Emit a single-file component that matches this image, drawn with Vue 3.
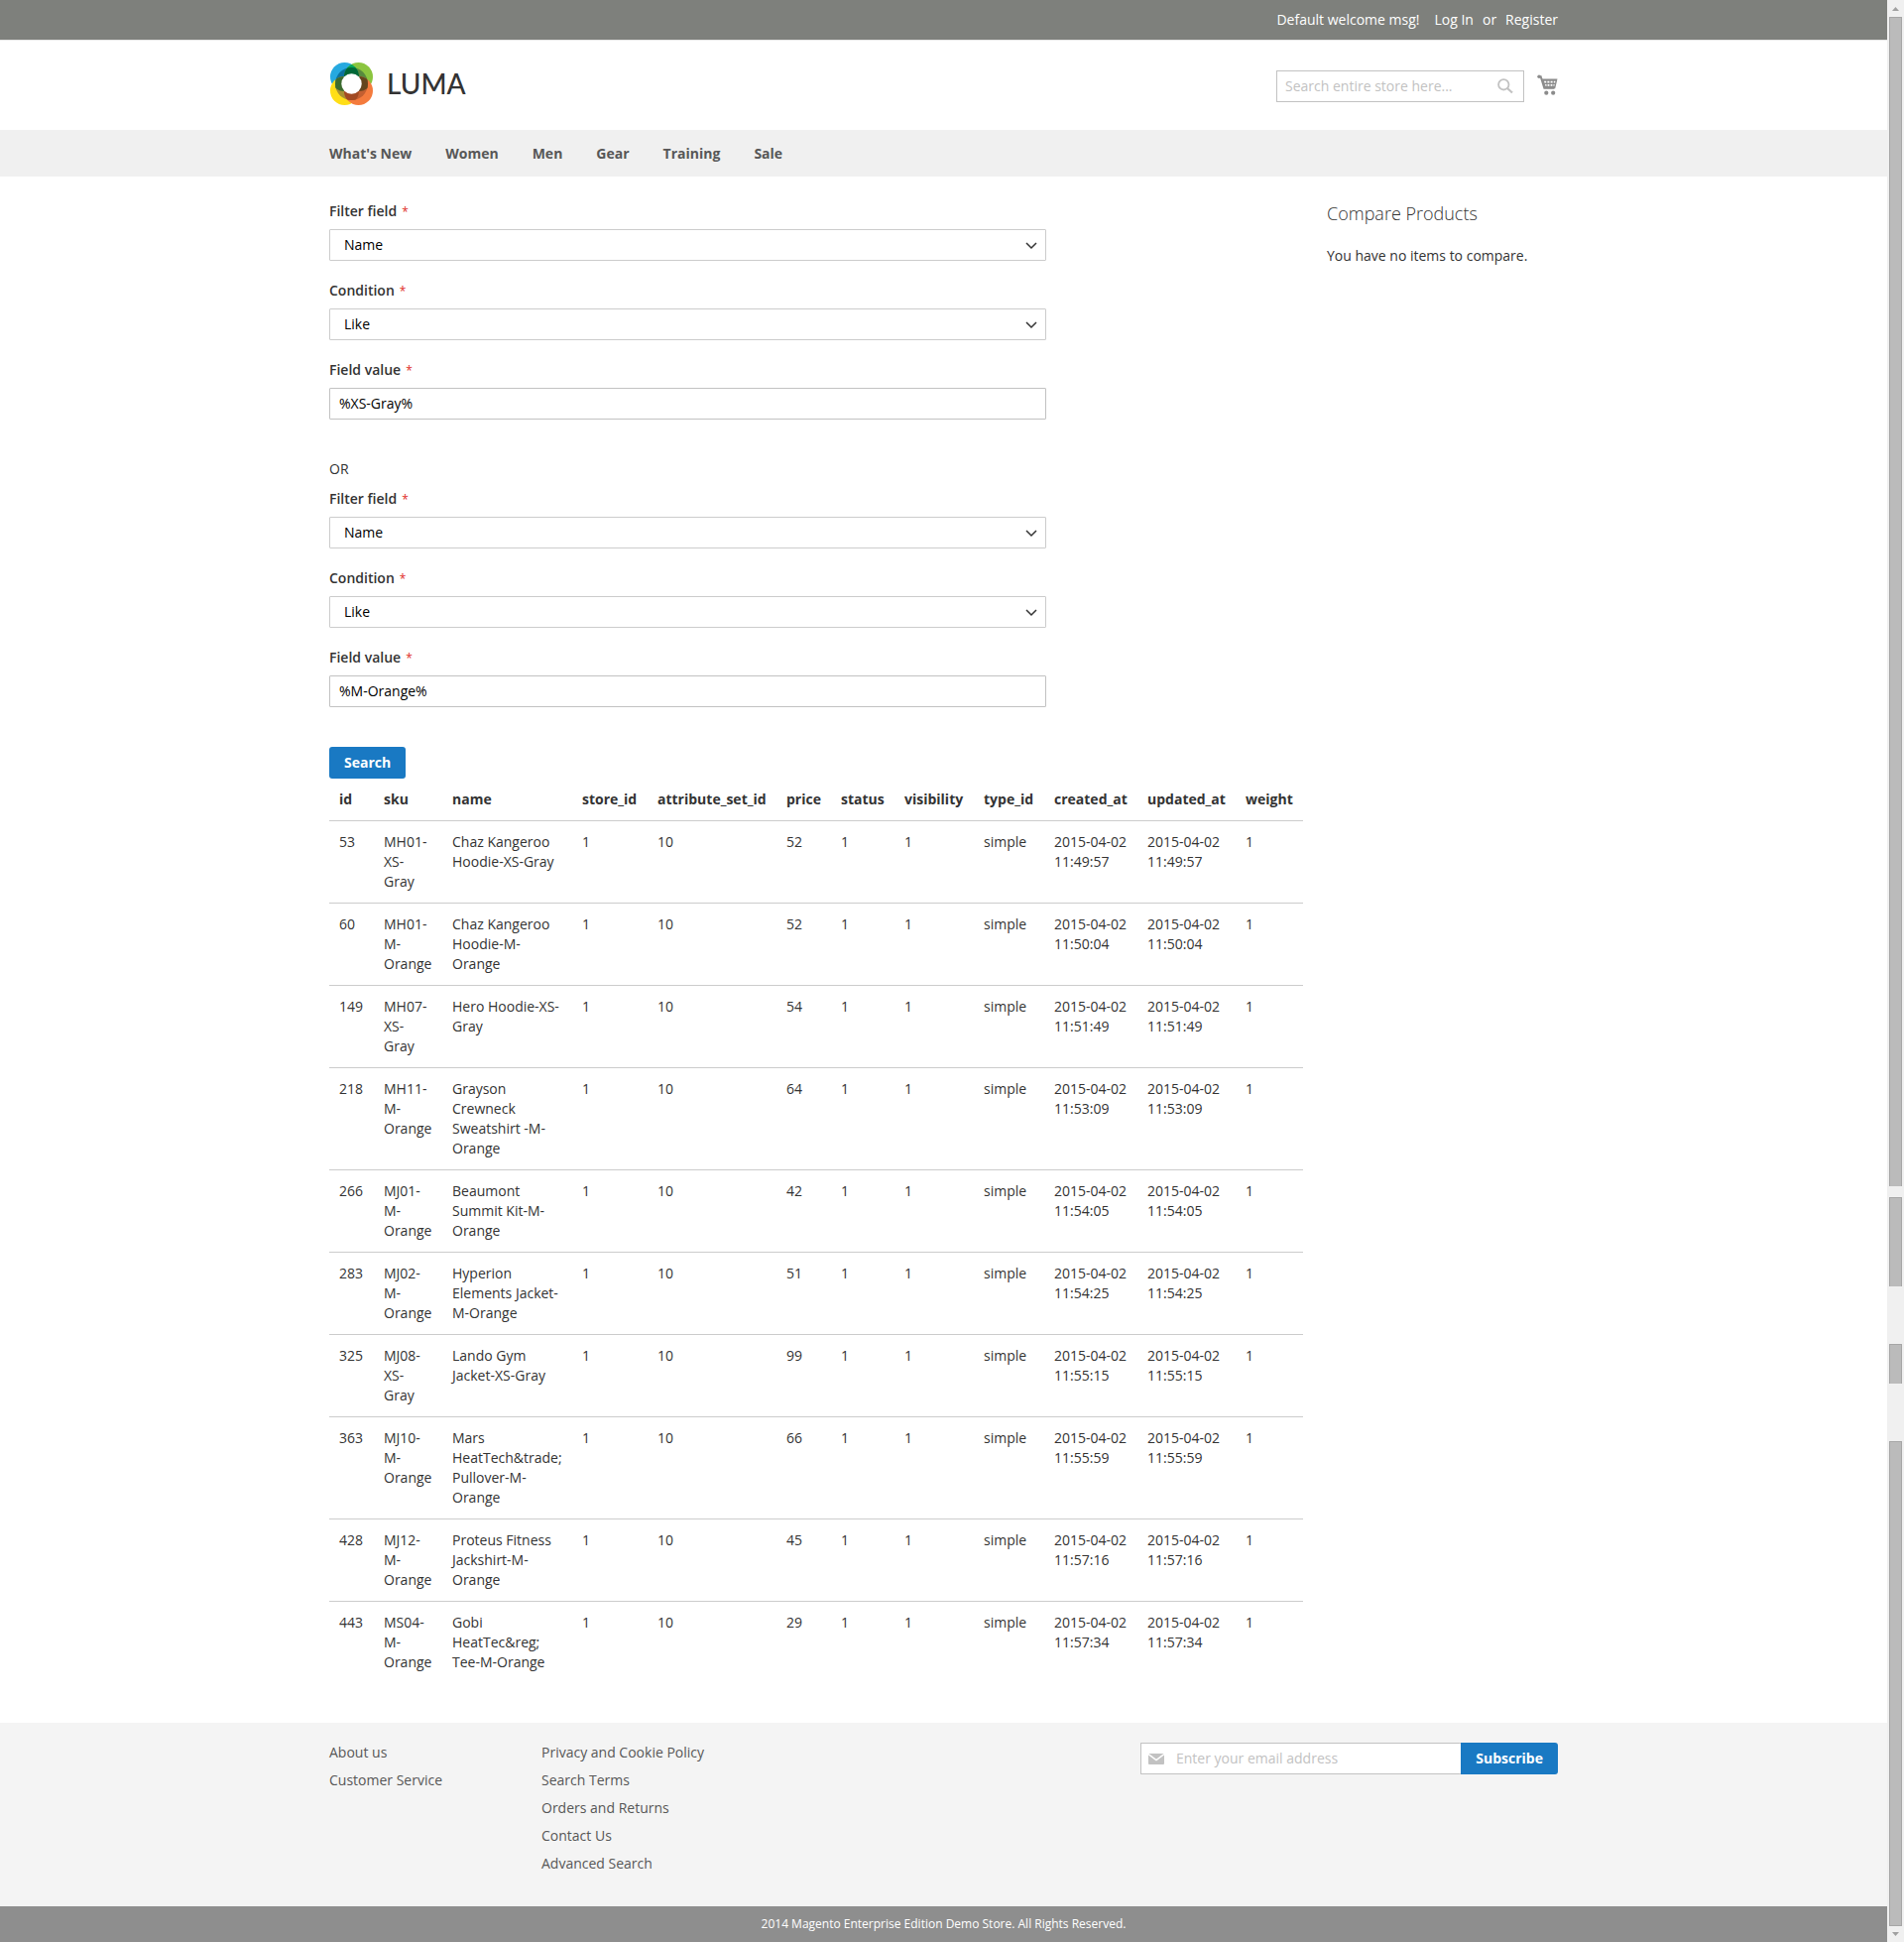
<script setup>
import { ref } from 'vue'

const nav = ["What's New", 'Women', 'Men', 'Gear', 'Training', 'Sale']

const filters = ref([
  { field: 'Name', condition: 'Like', value: '%XS-Gray%' },
  { field: 'Name', condition: 'Like', value: '%M-Orange%' },
])

const columns = [
  'id', 'sku', 'name', 'store_id', 'attribute_set_id', 'price',
  'status', 'visibility', 'type_id', 'created_at', 'updated_at', 'weight',
]

const products = [
  [53, 'MH01-XS-Gray', 'Chaz Kangeroo Hoodie-XS-Gray', 52, '11:49:57'],
  [60, 'MH01-M-Orange', 'Chaz Kangeroo Hoodie-M-Orange', 52, '11:50:04'],
  [149, 'MH07-XS-Gray', 'Hero Hoodie-XS-Gray', 54, '11:51:49'],
  [218, 'MH11-M-Orange', 'Grayson Crewneck Sweatshirt -M-Orange', 64, '11:53:09'],
  [266, 'MJ01-M-Orange', 'Beaumont Summit Kit-M-Orange', 42, '11:54:05'],
  [283, 'MJ02-M-Orange', 'Hyperion Elements Jacket-M-Orange', 51, '11:54:25'],
  [325, 'MJ08-XS-Gray', 'Lando Gym Jacket-XS-Gray', 99, '11:55:15'],
  [363, 'MJ10-M-Orange', 'Mars HeatTech&trade; Pullover-M-Orange', 66, '11:55:59'],
  [428, 'MJ12-M-Orange', 'Proteus Fitness Jackshirt-M-Orange', 45, '11:57:16'],
  [443, 'MS04-M-Orange', 'Gobi HeatTec&reg; Tee-M-Orange', 29, '11:57:34'],
].map(([id, sku, name, price, time]) => {
  const stamp = `2015-04-02 ${time}`
  return [id, sku, name, 1, 10, price, 1, 1, 'simple', stamp, stamp, 1]
})

const footerLinks = [
  ['About us', 'Customer Service'],
  ['Privacy and Cookie Policy', 'Search Terms', 'Orders and Returns', 'Contact Us', 'Advanced Search'],
]
</script>

<template>
  <div class="viewport">
    <div class="page">
      <header>
        <div class="panel">
          <div class="container panel-links">
            <span class="welcome">Default welcome msg!</span>
            <a href="#">Log In</a>
            <span class="or">or</span>
            <a href="#">Register</a>
          </div>
        </div>
        <div class="container masthead">
          <a class="logo" href="#">
            <svg width="43" height="43" viewBox="0 0 43 43" aria-hidden="true">
              <circle cx="14.500" cy="14.500" r="14.500" fill="#26a9e0" />
              <circle cx="28.500" cy="14.500" r="14.500" fill="#8bc53f" />
              <circle cx="14.500" cy="28.500" r="14.500" fill="#ffde17" />
              <circle cx="28.500" cy="28.500" r="14.500" fill="#f47b3d" />
              <clipPath id="tl"><circle cx="14.500" cy="14.500" r="14.500" /></clipPath>
              <clipPath id="tr"><circle cx="28.500" cy="14.500" r="14.500" /></clipPath>
              <clipPath id="bl"><circle cx="14.500" cy="28.500" r="14.500" /></clipPath>
              <clipPath id="br"><circle cx="28.500" cy="28.500" r="14.500" /></clipPath>
              <clipPath id="ring"><circle cx="21.500" cy="21.500" r="16.500" /></clipPath>
              <g clip-path="url(#tl)">
                <circle cx="21.500" cy="21.500" r="16.500" fill="#0b729f" />
              </g>
              <g clip-path="url(#tr)">
                <circle cx="21.500" cy="21.500" r="16.500" fill="#578a3e" />
              </g>
              <g clip-path="url(#bl)">
                <circle cx="21.500" cy="21.500" r="16.500" fill="#a89132" />
              </g>
              <g clip-path="url(#br)">
                <circle cx="21.500" cy="21.500" r="16.500" fill="#c35f31" />
              </g>
              <g clip-path="url(#ring)">
                <g clip-path="url(#tl)">
                  <circle cx="14.500" cy="28.500" r="14.500" fill="#3c6b2f" />
                </g>
                <g clip-path="url(#br)">
                  <circle cx="28.500" cy="14.500" r="14.500" fill="#64451d" />
                  <circle cx="14.500" cy="28.500" r="14.500" fill="#a24a22" />
                </g>
              </g>
              <g clip-path="url(#tl)">
                <path d="M15 17V0h13v17z" fill="#00a65c" clip-path="url(#tr)" />
              </g>
              <g clip-path="url(#tl)">
                <g clip-path="url(#tr)"><circle cx="21.500" cy="21.500" r="16.500" fill="#006838" /></g>
              </g>
              <circle cx="21.500" cy="21.500" r="10.200" fill="#fff" />
            </svg>
            <span>LUMA</span>
          </a>
          <div class="tools">
            <form class="site-search" @submit.prevent>
              <input type="text" placeholder="Search entire store here..." aria-label="Search" />
              <button type="submit" aria-label="Search">
                <svg width="16" height="16" viewBox="0 0 16 16" aria-hidden="true">
                  <circle cx="6.300" cy="6.300" r="5.200" fill="none" stroke="#c2c2c2" stroke-width="1.800" />
                  <path d="M10 10l5 4.500" stroke="#c2c2c2" stroke-width="2.200" />
                </svg>
              </button>
            </form>
            <a class="cart" href="#" aria-label="My Cart">
              <svg width="21" height="22" viewBox="0 0 21 22" aria-hidden="true">
                <path d="M1.500 2.200h2.200l3.600 11.500h10" fill="none" stroke="#8c8c8c" stroke-width="2" />
                <circle cx="2" cy="2.200" r="1.700" fill="#8c8c8c" />
                <path d="M4.800 4.500h15.700l-2.300 9.800H7.600z" fill="#8c8c8c" />
                <path
                  d="M7 6.800h2.200v1.700H7.500zM10.400 6.800h2v1.700h-2zM13.600 6.800h2v1.700h-2zM16.800 6.800h1.700l-.4 1.700h-1.300zM8 10h1.500v1.700H8.500zM10.600 10h1.800v1.700h-1.800zM13.600 10h1.800v1.700h-1.800zM16.500 10h1.200l-.4 1.700h-.8z"
                  fill="#fff"
                />
                <circle cx="9.300" cy="18.700" r="2.100" fill="#8c8c8c" />
                <circle cx="16.200" cy="18.700" r="2.100" fill="#8c8c8c" />
              </svg>
            </a>
          </div>
        </div>
        <nav>
          <div class="container nav-links">
            <a v-for="item in nav" :key="item" href="#">{{ item }}</a>
          </div>
        </nav>
      </header>

      <div class="container columns">
        <main>
          <form class="filters" @submit.prevent>
            <template v-for="(filter, i) in filters" :key="i">
              <p v-if="i > 0" class="separator">OR</p>
              <fieldset>
                <div class="field">
                  <label :for="`field-${i}`">Filter field<em>*</em></label>
                  <div class="select">
                    <select :id="`field-${i}`" v-model="filter.field"><option>Name</option></select>
                    <svg width="12" height="8" viewBox="0 0 12 8" aria-hidden="true">
                      <path d="M1 1l5 5 5-5" fill="none" stroke="#333" stroke-width="1.500" />
                    </svg>
                  </div>
                </div>
                <div class="field">
                  <label :for="`condition-${i}`">Condition<em>*</em></label>
                  <div class="select">
                    <select :id="`condition-${i}`" v-model="filter.condition"><option>Like</option></select>
                    <svg width="12" height="8" viewBox="0 0 12 8" aria-hidden="true">
                      <path d="M1 1l5 5 5-5" fill="none" stroke="#333" stroke-width="1.500" />
                    </svg>
                  </div>
                </div>
                <div class="field">
                  <label :for="`value-${i}`">Field value<em>*</em></label>
                  <input :id="`value-${i}`" v-model="filter.value" type="text" />
                </div>
              </fieldset>
            </template>
            <button class="primary" type="submit">Search</button>
          </form>

          <table>
            <colgroup>
              <col v-for="name in columns" :key="name" :class="`col-${name}`" />
            </colgroup>
            <thead>
              <tr><th v-for="name in columns" :key="name" scope="col">{{ name }}</th></tr>
            </thead>
            <tbody>
              <tr v-for="row in products" :key="row[0]">
                <td v-for="(cell, c) in row" :key="c">{{ cell }}</td>
              </tr>
            </tbody>
          </table>
        </main>

        <aside>
          <h2>Compare Products</h2>
          <p>You have no items to compare.</p>
        </aside>
      </div>

      <footer>
        <div class="container footer-content">
          <ul v-for="(group, g) in footerLinks" :key="g">
            <li v-for="link in group" :key="link"><a href="#">{{ link }}</a></li>
          </ul>
          <form class="newsletter" @submit.prevent>
            <div class="email">
              <svg width="16" height="11" viewBox="0 0 16 11" aria-hidden="true">
                <rect width="16" height="11" rx="1" fill="#c2c2c2" />
                <path d="M0 .5l8 6 8-6" fill="none" stroke="#fff" stroke-width="1.400" />
              </svg>
              <input type="email" placeholder="Enter your email address" aria-label="Email address" />
            </div>
            <button class="primary" type="submit">Subscribe</button>
          </form>
        </div>
        <small>2014 Magento Enterprise Edition Demo Store. All Rights Reserved.</small>
      </footer>
    </div>

    <div class="scrollbar" aria-hidden="true">
      <svg width="7" height="4" viewBox="0 0 7 4"><path d="M0 4L3.500 0 7 4z" fill="#a0a0a0" /></svg>
      <div class="track">
        <i class="thumb first"></i>
        <i class="gap narrow"></i>
        <i class="thumb second"></i>
        <i class="gap"></i>
        <i class="thumb third"></i>
        <i class="gap"></i>
        <i class="thumb last"></i>
      </div>
      <svg width="7" height="4" viewBox="0 0 7 4"><path d="M0 0h7L3.500 4z" fill="#a0a0a0" /></svg>
    </div>
  </div>
</template>

<style>
body {
  margin: 0;
  background: #fff;
}
</style>

<style scoped>
* {
  box-sizing: border-box;
}
.viewport {
  display: flex;
  font: 14px/20px "Open Sans", "Noto Sans", sans-serif;
  color: #333;
}
.page {
  flex: 1;
  min-width: 0;
}
.container {
  max-width: 1279px;
  margin: 0 auto;
  padding: 0 20px;
}
a {
  color: inherit;
  text-decoration: none;
}
input,
select,
button {
  font: inherit;
  margin: 0;
  height: 32px;
}
input,
select {
  width: 100%;
  border: 1px solid #c2c2c2;
  border-radius: 1px;
  background: #fff;
  color: #000;
  padding: 0 9px;
}
input {
  padding-bottom: 1px;
}
input::placeholder {
  color: #c2c2c2;
  opacity: 1;
}

.panel {
  background: #7e807c;
  border-bottom: 1px solid #e8e8e8;
  color: #fff;
}
.panel-links {
  display: flex;
  justify-content: flex-end;
  padding-top: 10px;
  padding-bottom: 10px;
}
.welcome {
  margin-right: 15px;
}
.or {
  margin: 0 9px;
}
.masthead {
  display: flex;
  justify-content: space-between;
  align-items: flex-start;
  height: 90px;
}
.logo {
  display: flex;
  align-items: center;
  gap: 14px;
  padding: 22px 0 0 1px;
  font: 500 28px/43px Lato, sans-serif;
}
.tools {
  display: flex;
  gap: 13px;
  padding-top: 30px;
}
.site-search {
  display: flex;
  width: 250px;
  border: 1px solid #c2c2c2;
}
.site-search input {
  border: 0;
  height: 30px;
  padding: 0 8px 1px;
}
.site-search button {
  display: flex;
  align-items: center;
  border: 0;
  background: none;
  height: 30px;
  padding: 0 10px;
}
.cart {
  padding-top: 4px;
}
nav {
  background: #f0f0f0;
}
.nav-links {
  display: flex;
  gap: 34px;
  font-weight: 700;
  line-height: 47px;
  color: #575757;
}

.columns {
  display: flex;
  padding-top: 25px;
  padding-bottom: 40px;
}
main {
  flex: 1;
  min-width: 0;
}
.filters {
  max-width: 723px;
}
fieldset {
  border: 0;
  margin: 0 0 40px;
  padding: 0;
  display: flex;
  flex-direction: column;
  gap: 20px;
}
.field {
  display: flex;
  flex-direction: column;
  gap: 8px;
}
label {
  font-weight: 600;
}
label em {
  margin-left: 5px;
  font-size: 12px;
  line-height: 12px;
  font-style: normal;
  font-weight: 400;
  color: #e02b27;
}
.separator {
  margin: 0 0 10px;
}
.select {
  position: relative;
}
select {
  display: block;
  appearance: none;
  border-color: #ccc;
  padding: 0 14px;
}
.select svg {
  position: absolute;
  right: 9px;
  top: 13px;
  pointer-events: none;
}
.primary {
  border: 0;
  border-radius: 3px;
  padding: 0 15px;
  background: #1979c3;
  color: #fff;
  font-weight: 700;
}
.filters .primary {
  display: block;
}

table {
  width: 100%;
  table-layout: fixed;
  border-collapse: separate;
  border-spacing: 0;
}
th,
td {
  padding: 11px 10px;
  text-align: left;
  vertical-align: top;
}
th,
tr:not(:last-child) td {
  border-bottom: 1px solid #ccc;
}
th {
  font-weight: 700;
}
.col-id { width: 45px; }
.col-sku { width: 69px; }
.col-name { width: 131px; }
.col-store_id { width: 76px; }
.col-attribute_set_id { width: 130px; }
.col-price { width: 55px; }
.col-status { width: 64px; }
.col-visibility { width: 80px; }
.col-type_id { width: 71px; }
.col-created_at { width: 94px; }
.col-updated_at { width: 99px; }

aside {
  width: 257px;
  padding-left: 24px;
}
aside h2 {
  margin: 2px 0 23px;
  font-size: 18px;
  line-height: 20px;
  font-weight: 300;
}
aside p {
  margin: 0;
}

footer {
  background: #f4f4f4;
  color: #575757;
}
.footer-content {
  display: flex;
  align-items: flex-start;
  padding-top: 20px;
  padding-bottom: 25px;
}
ul {
  list-style: none;
  width: 214px;
  margin: 0;
  padding: 0;
}
li {
  line-height: 20px;
  margin-bottom: 8px;
}
.newsletter {
  display: flex;
  width: 421px;
  margin-left: auto;
}
.email {
  position: relative;
  flex: 1;
}
.email input {
  padding: 0 8px 1px 35px;
  border-right: 0;
}
.email svg {
  position: absolute;
  left: 8px;
  top: 11px;
}
.newsletter .primary {
  border-radius: 0 3px 3px 0;
}
small {
  display: block;
  padding: 8px 0;
  background: #8e8e8e;
  color: #fff;
  font-size: 12px;
  text-align: center;
}

.scrollbar {
  display: flex;
  flex-direction: column;
  align-items: center;
  gap: 6px;
  width: 17px;
  padding: 7px 0 6px;
  background: #f0f0f0;
}
.track {
  display: flex;
  flex-direction: column;
  flex: 1;
  width: 13px;
}
.thumb {
  border: 1px solid #a6a6a6;
  border-bottom: 0;
  background: #bbb;
}
.gap {
  flex: 58 0 0;
}
.narrow {
  flex-grow: 11;
}
.first { flex: 1181 0 0; }
.second { flex: 89 0 0; }
.third { flex: 40 0 0; }
.last {
  flex: 488 0 0;
  border-bottom: 1px solid #a6a6a6;
}
</style>
